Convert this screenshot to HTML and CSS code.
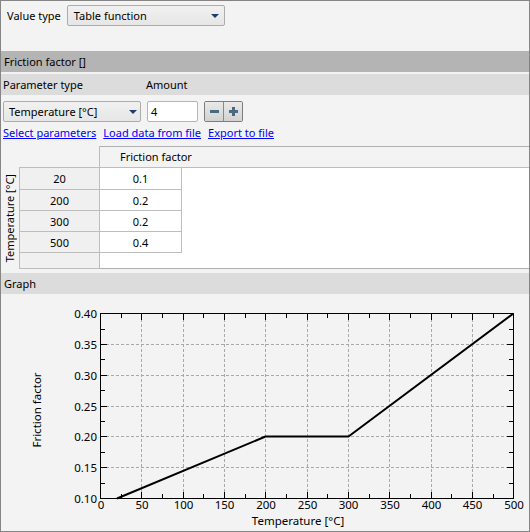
FILE: index.html
```html
<!DOCTYPE html>
<html>
<head>
<meta charset="utf-8">
<link rel="stylesheet" href="styles.css">
</head>
<body>
<div class="window">
  <div class="value-row">
    <span class="label">Value type</span>
    <div class="combo combo-value"><span>Table function</span><span class="arrow"></span></div>
  </div>

  <div class="section-header">Friction factor []</div>

  <div class="param-header">
    <span class="ph-type">Parameter type</span>
    <span>Amount</span>
  </div>

  <div class="controls">
    <div class="combo combo-param"><span>Temperature [°C]</span><span class="arrow"></span></div>
    <div class="amount">4</div>
    <div class="spin">
      <div class="spin-btn"><span class="minus"></span></div>
      <div class="spin-btn"><span class="plus"></span></div>
    </div>
  </div>

  <div class="links">
    <a class="link">Select parameters</a>
    <a class="link">Load data from file</a>
    <a class="link">Export to file</a>
  </div>

  <div class="table">
    <div class="corner-a"></div>
    <div class="corner-b"></div>
    <div class="col-head">Friction factor</div>
    <div class="vhead"><span>Temperature [°C]</span></div>
    <div class="rh r2">20</div>
    <div class="cell r2">0.1</div>
    <div class="rh r3">200</div>
    <div class="cell r3">0.2</div>
    <div class="rh r4">300</div>
    <div class="cell r4">0.2</div>
    <div class="rh r5">500</div>
    <div class="cell r5">0.4</div>
    <div class="rh r6"></div>
    <div class="filler"></div>
    <div class="empty"></div>
  </div>

  <div class="section-header light">Graph</div>

  <div class="graph">
    <svg class="chart" width="528" height="237" viewBox="1 294 528 237" xmlns="http://www.w3.org/2000/svg">
      <g class="grid" stroke="#a8a8a8" stroke-width="1" stroke-dasharray="3 2" fill="none">
        <line x1="141.5" y1="314" x2="141.5" y2="498"/>
        <line x1="183.5" y1="314" x2="183.5" y2="498"/>
        <line x1="224.5" y1="314" x2="224.5" y2="498"/>
        <line x1="265.5" y1="314" x2="265.5" y2="498"/>
        <line x1="307.5" y1="314" x2="307.5" y2="498"/>
        <line x1="348.5" y1="314" x2="348.5" y2="498"/>
        <line x1="389.5" y1="314" x2="389.5" y2="498"/>
        <line x1="431.5" y1="314" x2="431.5" y2="498"/>
        <line x1="472.5" y1="314" x2="472.5" y2="498"/>
        <line x1="101" y1="344.5" x2="513" y2="344.5"/>
        <line x1="101" y1="375.5" x2="513" y2="375.5"/>
        <line x1="101" y1="406.5" x2="513" y2="406.5"/>
        <line x1="101" y1="436.5" x2="513" y2="436.5"/>
        <line x1="101" y1="467.5" x2="513" y2="467.5"/>
      </g>
      <g class="ticks" stroke="#000" stroke-width="1">
        <line x1="121.5" y1="498" x2="121.5" y2="494"/>
        <line x1="162.5" y1="498" x2="162.5" y2="494"/>
        <line x1="203.5" y1="498" x2="203.5" y2="494"/>
        <line x1="245.5" y1="498" x2="245.5" y2="494"/>
        <line x1="286.5" y1="498" x2="286.5" y2="494"/>
        <line x1="327.5" y1="498" x2="327.5" y2="494"/>
        <line x1="369.5" y1="498" x2="369.5" y2="494"/>
        <line x1="410.5" y1="498" x2="410.5" y2="494"/>
        <line x1="451.5" y1="498" x2="451.5" y2="494"/>
        <line x1="493.5" y1="498" x2="493.5" y2="494"/>
        <line x1="141.5" y1="498" x2="141.5" y2="492"/>
        <line x1="183.5" y1="498" x2="183.5" y2="492"/>
        <line x1="224.5" y1="498" x2="224.5" y2="492"/>
        <line x1="265.5" y1="498" x2="265.5" y2="492"/>
        <line x1="307.5" y1="498" x2="307.5" y2="492"/>
        <line x1="348.5" y1="498" x2="348.5" y2="492"/>
        <line x1="389.5" y1="498" x2="389.5" y2="492"/>
        <line x1="431.5" y1="498" x2="431.5" y2="492"/>
        <line x1="472.5" y1="498" x2="472.5" y2="492"/>
        <line x1="121.5" y1="314" x2="121.5" y2="318"/>
        <line x1="162.5" y1="314" x2="162.5" y2="318"/>
        <line x1="203.5" y1="314" x2="203.5" y2="318"/>
        <line x1="245.5" y1="314" x2="245.5" y2="318"/>
        <line x1="286.5" y1="314" x2="286.5" y2="318"/>
        <line x1="327.5" y1="314" x2="327.5" y2="318"/>
        <line x1="369.5" y1="314" x2="369.5" y2="318"/>
        <line x1="410.5" y1="314" x2="410.5" y2="318"/>
        <line x1="451.5" y1="314" x2="451.5" y2="318"/>
        <line x1="493.5" y1="314" x2="493.5" y2="318"/>
        <line x1="141.5" y1="314" x2="141.5" y2="320"/>
        <line x1="183.5" y1="314" x2="183.5" y2="320"/>
        <line x1="224.5" y1="314" x2="224.5" y2="320"/>
        <line x1="265.5" y1="314" x2="265.5" y2="320"/>
        <line x1="307.5" y1="314" x2="307.5" y2="320"/>
        <line x1="348.5" y1="314" x2="348.5" y2="320"/>
        <line x1="389.5" y1="314" x2="389.5" y2="320"/>
        <line x1="431.5" y1="314" x2="431.5" y2="320"/>
        <line x1="472.5" y1="314" x2="472.5" y2="320"/>
        <line x1="101" y1="329.5" x2="105" y2="329.5"/>
        <line x1="101" y1="359.5" x2="105" y2="359.5"/>
        <line x1="101" y1="390.5" x2="105" y2="390.5"/>
        <line x1="101" y1="421.5" x2="105" y2="421.5"/>
        <line x1="101" y1="452.5" x2="105" y2="452.5"/>
        <line x1="101" y1="483.5" x2="105" y2="483.5"/>
        <line x1="101" y1="344.5" x2="107" y2="344.5"/>
        <line x1="101" y1="375.5" x2="107" y2="375.5"/>
        <line x1="101" y1="406.5" x2="107" y2="406.5"/>
        <line x1="101" y1="436.5" x2="107" y2="436.5"/>
        <line x1="101" y1="467.5" x2="107" y2="467.5"/>
        <line x1="513" y1="329.5" x2="509" y2="329.5"/>
        <line x1="513" y1="359.5" x2="509" y2="359.5"/>
        <line x1="513" y1="390.5" x2="509" y2="390.5"/>
        <line x1="513" y1="421.5" x2="509" y2="421.5"/>
        <line x1="513" y1="452.5" x2="509" y2="452.5"/>
        <line x1="513" y1="483.5" x2="509" y2="483.5"/>
        <line x1="513" y1="344.5" x2="507" y2="344.5"/>
        <line x1="513" y1="375.5" x2="507" y2="375.5"/>
        <line x1="513" y1="406.5" x2="507" y2="406.5"/>
        <line x1="513" y1="436.5" x2="507" y2="436.5"/>
        <line x1="513" y1="467.5" x2="507" y2="467.5"/>
      </g>
      <rect x="100.5" y="313.5" width="413" height="185" fill="none" stroke="#000" stroke-width="1"/>
      <polyline points="117,498.5 265.5,436.5 348.5,436.5 513.5,313.5" fill="none" stroke="#000" stroke-width="2" stroke-linejoin="round"/>
      <g class="ylabels" text-anchor="end">
        <text x="97" y="318">0.40</text>
        <text x="97" y="349">0.35</text>
        <text x="97" y="380">0.30</text>
        <text x="97" y="411">0.25</text>
        <text x="97" y="441">0.20</text>
        <text x="97" y="472">0.15</text>
        <text x="97" y="503">0.10</text>
      </g>
      <g class="xlabels" text-anchor="middle">
        <text x="101" y="509">0</text>
        <text x="142" y="509">50</text>
        <text x="183.5" y="509">100</text>
        <text x="224.5" y="509">150</text>
        <text x="266" y="509">200</text>
        <text x="307.5" y="509">250</text>
        <text x="348.5" y="509">300</text>
        <text x="390" y="509">350</text>
        <text x="431.5" y="509">400</text>
        <text x="472.5" y="509">450</text>
        <text x="514" y="509">500</text>
      </g>
      <text class="axis-title" x="298" y="525" text-anchor="middle">Temperature [°C]</text>
      <text class="axis-title" x="0" y="0" text-anchor="middle" transform="translate(41 410) rotate(-90)">Friction factor</text>
    </svg>
  </div>
</div>
</body>
</html>
```

FILE: styles.css
```css
* { box-sizing: border-box; }

html, body {
  margin: 0;
  padding: 0;
  background: #f3f3f3;
}

body {
  font-family: "Noto Sans", "Open Sans", sans-serif;
  font-size: 11px;
  color: #000;
}

.window {
  width: 530px;
  height: 532px;
  border: 1px solid #858585;
  background: #f3f3f3;
  display: flex;
  flex-direction: column;
  overflow: hidden;
}

/* Value type row */
.value-row {
  display: flex;
  align-items: flex-start;
  gap: 6px;
  padding: 4px 0 0 6px;
  height: 50px;
  flex: none;
}
.value-row .label {
  line-height: 21px;
  height: 21px;
}

.combo {
  height: 21px;
  border: 1px solid #acacac;
  border-radius: 2px;
  background: linear-gradient(#f1f1f1, #e6e6e6);
  display: flex;
  align-items: center;
  justify-content: space-between;
  padding: 0 5px 0 6px;
}
.combo-value { width: 158px; }
.combo-param { width: 138px; padding-left: 5px; padding-right: 3px; }

.arrow {
  width: 0;
  height: 0;
  border-left: 4.5px solid transparent;
  border-right: 4.5px solid transparent;
  border-top: 4.5px solid #1d3c73;
}

/* Section headers */
.section-header {
  height: 21px;
  line-height: 21px;
  background: #b4b4b4;
  padding-left: 3px;
  flex: none;
}
.section-header.light {
  background: #dcdcdc;
  margin-top: 4px;
}

.param-header {
  margin-top: 2px;
  height: 21px;
  line-height: 21px;
  background: #dcdcdc;
  padding-left: 2px;
  display: flex;
  flex: none;
}
.ph-type { width: 143px; }

/* Controls row */
.controls {
  margin-top: 6px;
  height: 21px;
  display: flex;
  gap: 6px;
  padding-left: 2px;
  flex: none;
}
.amount {
  width: 51px;
  height: 21px;
  line-height: 19px;
  background: #fff;
  border: 1px solid #b5b5b5;
  border-radius: 2px;
  padding-left: 3px;
}
.spin {
  display: flex;
  height: 21px;
  border: 1px solid #7d7d7d;
  border-radius: 2px;
  overflow: hidden;
}
.spin-btn {
  width: 18px;
  height: 19px;
  background: linear-gradient(#e9e9e9, #d2d2d2);
  display: flex;
  align-items: center;
  justify-content: center;
}
.spin-btn + .spin-btn {
  border-left: 1px solid #8a8a8a;
  width: 19px;
}
.minus, .plus {
  position: relative;
  width: 9px;
  height: 3px;
  background: #4a6a82;
}
.plus::after {
  content: "";
  position: absolute;
  left: 3px;
  top: -3px;
  width: 3px;
  height: 9px;
  background: #4a6a82;
}

/* Links */
.links {
  height: 24px;
  padding: 3px 0 0 2px;
  line-height: 15px;
  display: flex;
  gap: 7px;
  flex: none;
}
.link {
  color: #0000ff;
  text-decoration: underline;
  cursor: pointer;
}

/* Table */
.table {
  display: grid;
  grid-template-columns: 18px 81px 82px 1fr;
  grid-template-rows: 22px 22px 21px 21px 21px 16px;
  flex: none;
}
.corner-a { grid-row: 1; grid-column: 1; }
.corner-b {
  grid-row: 1;
  grid-column: 2;
  border-bottom: 1px solid #bdbdbd;
  border-right: 1px solid #bdbdbd;
}
.col-head {
  grid-row: 1;
  grid-column: 3 / 5;
  border-top: 1px solid #b0b0b0;
  border-bottom: 1px solid #bdbdbd;
  padding-left: 20px;
  line-height: 20px;
  background: #f3f3f3;
}
.vhead {
  grid-row: 2 / 7;
  grid-column: 1;
  display: flex;
  align-items: center;
  justify-content: center;
}
.vhead span {
  writing-mode: vertical-rl;
  transform: rotate(180deg);
  line-height: 16px;
}
.rh {
  grid-column: 2;
  background: #f0f0f0;
  border-left: 1px solid #bdbdbd;
  border-right: 1px solid #bdbdbd;
  border-bottom: 1px solid #bdbdbd;
  display: flex;
  align-items: center;
  justify-content: center;
}
.cell {
  grid-column: 3;
  background: #fff;
  border-right: 1px solid #bdbdbd;
  border-bottom: 1px solid #bdbdbd;
  display: flex;
  align-items: center;
  justify-content: center;
}
.r2 { grid-row: 2; }
.r3 { grid-row: 3; }
.r4 { grid-row: 4; }
.r5 { grid-row: 5; }
.r6 { grid-row: 6; }
.filler {
  grid-row: 2 / 6;
  grid-column: 4;
  background: #fff;
}
.empty {
  grid-row: 6;
  grid-column: 3 / 5;
  background: #fff;
  border-bottom: 1px solid #b0b0b0;
}

/* Graph */
.graph {
  flex: none;
  height: 237px;
}
.chart {
  display: block;
  font-family: "Noto Sans", "Open Sans", sans-serif;
  font-size: 11.5px;
}
.chart text { fill: #000; }
```
